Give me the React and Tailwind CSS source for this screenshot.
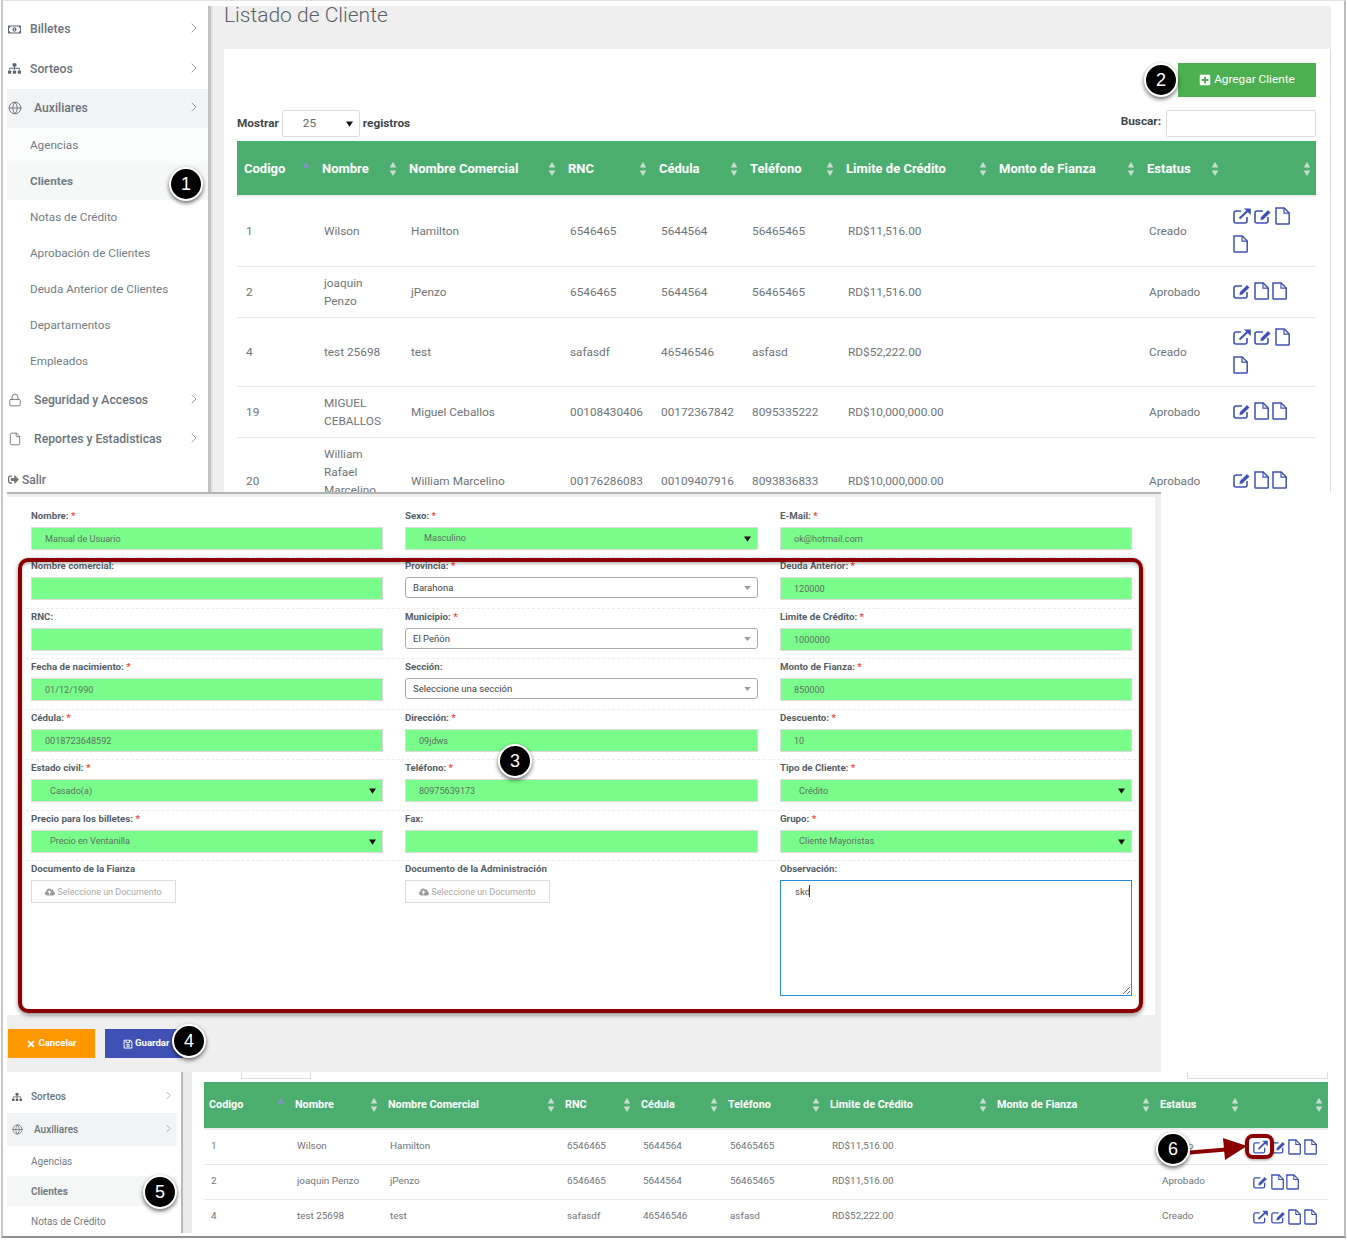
import React from 'react'
import { ChevronRight, Globe, Lock, File as FileIcon } from 'lucide-react'
import {
  FaRegMoneyBillAlt,
  FaSitemap,
  FaSignOutAlt,
  FaPlusSquare,
  FaCloudUploadAlt,
  FaTimes,
  FaRegSave,
} from 'react-icons/fa'

const clientes = [
  { id: '1', nombre: 'Wilson', comercial: 'Hamilton', rnc: '6546465', cedula: '5644564', tel: '56465465', limite: 'RD$11,516.00', estatus: 'Creado', icons: ['ext', 'edit', 'file', 'file'], h: 'h-[70px]' },
  { id: '2', nombre: 'joaquin Penzo', comercial: 'jPenzo', rnc: '6546465', cedula: '5644564', tel: '56465465', limite: 'RD$11,516.00', estatus: 'Aprobado', icons: ['edit', 'file', 'file'], h: 'h-[51px]' },
  { id: '4', nombre: 'test 25698', comercial: 'test', rnc: 'safasdf', cedula: '46546546', tel: 'asfasd', limite: 'RD$52,222.00', estatus: 'Creado', icons: ['ext', 'edit', 'file', 'file'], h: 'h-[69px]' },
  { id: '19', nombre: 'MIGUEL CEBALLOS', comercial: 'Miguel Ceballos', rnc: '00108430406', cedula: '00172367842', tel: '8095335222', limite: 'RD$10,000,000.00', estatus: 'Aprobado', icons: ['edit', 'file', 'file'], h: 'h-[51px]' },
  // the last line of this name falls under the form capture
  { id: '20', nombre: <>William Rafael Marcelino<br />&nbsp;</>, comercial: 'William Marcelino', rnc: '00176286083', cedula: '00109407916', tel: '8093836833', limite: 'RD$10,000,000.00', estatus: 'Aprobado', icons: ['edit', 'file', 'file'], h: 'h-[88px]' },
]

const headers = ['Codigo', 'Nombre', 'Nombre Comercial', 'RNC', 'Cédula', 'Teléfono', 'Limite de Crédito', 'Monto de Fianza', 'Estatus', '']
const bigWidths = ['w-[78px]', 'w-[87px]', 'w-[159px]', 'w-[91px]', 'w-[91px]', 'w-[96px]', 'w-[153px]', 'w-[148px]', 'w-[84px]', 'w-[92px]']
const smallWidths = ['w-[86px]', 'w-[93px]', 'w-[177px]', 'w-[76px]', 'w-[87px]', 'w-[102px]', 'w-[167px]', 'w-[163px]', 'w-[89px]', 'w-[84px]']

const ExtIcon = ({ className }) => (
  <svg viewBox="0 0 18 16" className={className} fill="none" stroke="#3f51b5">
    <path d="M8 3H3a2 2 0 0 0-2 2v8a2 2 0 0 0 2 2h9a2 2 0 0 0 2-2V9" strokeWidth="1.6" />
    <path d="M6.5 10.5 15 2.5" strokeWidth="2.2" />
    <path d="M11 0.4h6.8v6.6z" fill="#3f51b5" stroke="none" />
  </svg>
)

const EditIcon = ({ className }) => (
  <svg viewBox="0 0 18 16" className={className} fill="none" stroke="#3f51b5">
    <path d="M9 3H3a2 2 0 0 0-2 2v8a2 2 0 0 0 2 2h9a2 2 0 0 0 2-2V9" strokeWidth="1.6" />
    <path d="M6 12.5l.7-3.4L14 1.8l2.8 2.8-7.4 7.2z" fill="#3f51b5" stroke="#fff" strokeWidth="0.6" />
  </svg>
)

const FileOutline = ({ className }) => (
  <svg viewBox="0 0 15 18" className={className} fill="none" stroke="#3f51b5" strokeWidth="1.5">
    <path d="M1 .9h8.2L14.2 6v10.3a.8.8 0 0 1-.8.8H1.8a.8.8 0 0 1-.8-.8z" />
    <path d="M9 .9v5.3h5.2" strokeWidth="1.2" />
  </svg>
)

const SortIcon = ({ active }) => (
  <svg viewBox="0 0 8 15" className="w-[8px] h-[14px] shrink-0">
    <path d="M4 0l3.6 5.8H.4z" fill={active ? '#8a8fd0' : '#c9dccf'} />
    {!active && <path d="M4 15l3.6-5.8H.4z" fill="#c9dccf" />}
  </svg>
)

const Caret = () => (
  <svg viewBox="0 0 8 6" className="w-[7px] h-[6px]">
    <path d="M0 0h8L4 6z" fill="#111" />
  </svg>
)

const ActionIcons = ({ icons, small }) => {
  const ext = small ? 'w-[15px] h-[14px]' : 'w-[18px] h-[16px]'
  const file = small ? 'w-[13px] h-[16px]' : 'w-[15px] h-[18px]'
  return (
    <div className={small ? 'flex items-center gap-x-[2.5px]' : 'flex flex-wrap items-center gap-x-[3px] gap-y-[10px] w-[66px] -mt-[2px]'}>
      {icons.map((name, i) =>
        name === 'ext' ? (
          <ExtIcon key={i} className={ext} />
        ) : name === 'edit' ? (
          <EditIcon key={i} className={ext} />
        ) : (
          <FileOutline key={i} className={file} />
        )
      )}
    </div>
  )
}

const NavRow = ({ icon, label, wide, active }) => (
  <div className={`flex items-center h-[39.5px] pl-[1px] pr-[6px] text-[12.2px] font-medium text-[#6a737b] ${active ? 'bg-[#f2f3f4]' : ''}`}>
    <span className="w-[22px] flex text-[#5d656d]">{icon}</span>
    <span className={`flex-1 ${wide ? 'ml-[4px]' : 'ml-[0px]'}`}>{label}</span>
    <ChevronRight size={16} strokeWidth={1.25} className="text-[#888] -mt-[2px]" />
  </div>
)

const SubRow = ({ label, active, tint }) => (
  <div className={`flex items-center h-[36px] pl-[23px] text-[11.7px] text-[#737c84] ${tint ? 'bg-[#fafbfb]' : ''} ${active ? 'bg-[#f6f8f8] font-bold' : ''}`}>
    {label}
  </div>
)

const GreenInput = ({ value }) => (
  <input
    readOnly
    value={value}
    className="block w-full h-[23px] pl-[13px] pr-[13px] pt-[1px] bg-[#79fc89] border border-[#dcdcdc] text-[9.1px] text-[#5f7064] outline-none"
  />
)

const GreenSelect = ({ value }) => (
  <div className="flex items-center justify-between w-full h-[23px] pl-[18px] pr-[6px] pt-[1px] bg-[#79fc89] border border-[#dcdcdc] text-[9.1px] text-[#5f7064]">
    <span>{value}</span>
    <Caret />
  </div>
)

const WhiteSelect = ({ value }) => (
  <div className="flex items-center justify-between w-full h-[21px] pl-[7px] pr-[6px] pt-[1px] bg-white border border-[#a9a9a9] rounded-[3px] text-[9.5px] text-[#444]">
    <span>{value}</span>
    <svg viewBox="0 0 8 5" className="w-[7px] h-[4px]">
      <path d="M0 0h8L4 5z" fill="#999" />
    </svg>
  </div>
)

const UploadButton = () => (
  <div className="flex items-center justify-center gap-[2px] w-[145px] h-[23px] pt-[1px] border border-[#ddd] text-[9px] text-[#aaa]">
    <FaCloudUploadAlt size={10} className="text-[#999]" />
    <span>Seleccione un Documento</span>
  </div>
)

const Field = ({ label, required, children }) => (
  <div>
    <div className="h-[19px] pt-[1px] text-[9.7px] font-bold text-[#555e66] leading-[13px]">
      {label}
      {required && <span className="text-[#f44336]"> *</span>}
    </div>
    {children}
  </div>
)

const formRows = [
  [
    <Field label="Nombre:" required><GreenInput value="Manual de Usuario" /></Field>,
    <Field label="Sexo:" required><GreenSelect value="Masculino" /></Field>,
    <Field label="E-Mail:" required><GreenInput value="ok@hotmail.com" /></Field>,
  ],
  [
    <Field label="Nombre comercial:"><GreenInput value="" /></Field>,
    <Field label="Provincia:" required><WhiteSelect value="Barahona" /></Field>,
    <Field label="Deuda Anterior:" required><GreenInput value="120000" /></Field>,
  ],
  [
    <Field label="RNC:"><GreenInput value="" /></Field>,
    <Field label="Municipio:" required><WhiteSelect value="El Peñón" /></Field>,
    <Field label="Limite de Crédito:" required><GreenInput value="1000000" /></Field>,
  ],
  [
    <Field label="Fecha de nacimiento:" required><GreenInput value="01/12/1990" /></Field>,
    <Field label="Sección:"><WhiteSelect value="Seleccione una sección" /></Field>,
    <Field label="Monto de Fianza:" required><GreenInput value="850000" /></Field>,
  ],
  [
    <Field label="Cédula:" required><GreenInput value="0018723648592" /></Field>,
    <Field label="Dirección:" required><GreenInput value="09jdws" /></Field>,
    <Field label="Descuento:" required><GreenInput value="10" /></Field>,
  ],
  [
    <Field label="Estado civil:" required><GreenSelect value="Casado(a)" /></Field>,
    <Field label="Teléfono:" required><GreenInput value="80975639173" /></Field>,
    <Field label="Tipo de Cliente:" required><GreenSelect value="Crédito" /></Field>,
  ],
  [
    <Field label="Precio para los billetes:" required><GreenSelect value="Precio en Ventanilla" /></Field>,
    <Field label="Fax:"><GreenInput value="" /></Field>,
    <Field label="Grupo:" required><GreenSelect value="Cliente Mayoristas" /></Field>,
  ],
]

const Badge = ({ n, className }) => (
  <div className={`absolute flex items-center justify-center w-[34px] h-[34px] rounded-full bg-black border-[2px] border-white text-white text-[18px] font-['Liberation_Sans',sans-serif] shadow-[0_2px_4px_rgba(0,0,0,0.6)] ${className}`}>
    {n}
  </div>
)

const ClientTable = ({ small, rows, widths }) => (
  <table className={`table-fixed border-collapse ${small ? 'w-[1124px] text-[9.9px]' : 'w-[1079px] text-[11.8px]'} text-[#6f7479]`}>
    <thead>
      <tr className={`${small ? 'h-[47px] text-[10.8px]' : 'h-[55px] text-[13px]'} bg-[#4bae6f] text-white`}>
        {headers.map((title, i) => (
          <th key={i} className={`${widths[i]} ${small ? 'pl-[5px]' : 'pl-[7px] pt-[2px]'} pr-[5px] font-bold text-left`}>
            <div className="flex items-center justify-between">
              <span className="whitespace-nowrap">{title}</span>
              <SortIcon active={i === 0} />
            </div>
          </th>
        ))}
      </tr>
    </thead>
    <tbody>
      {rows.map((c, idx) => (
        <tr key={c.id} className={`${small ? 'h-[35px]' : c.h} border-b border-[#e9e9e9] ${idx === 0 ? 'border-t-[2px] border-t-[#ececec]' : ''}`}>
          {[c.id, c.nombre, c.comercial, c.rnc, c.cedula, c.tel, c.limite, '', c.estatus].map((val, i) => (
            <td
              key={i}
              className={`${small ? 'pl-[7px] whitespace-nowrap' : 'pl-[9px] leading-[18px]'} ${!small && i === 1 ? 'pr-[16px]' : ''}`}
            >
              {val}
            </td>
          ))}
          <td className="pl-[9px]">
            <ActionIcons icons={c.icons} small={small} />
          </td>
        </tr>
      ))}
    </tbody>
  </table>
)

export default function App() {
  const smallRows = clientes.slice(0, 3)

  return (
    <div className="relative w-[1347px] h-[1240px] bg-white overflow-hidden font-['Roboto',sans-serif]">
      <div className="ml-[1px] w-[1345px] h-[1238px] pl-[4px] border-t border-t-[#e2e2e2] border-l-2 border-l-[#c8c8c8] border-r-2 border-r-[#bdbdbd] border-b-2 border-b-[#8f8f8f]">
        {/* first capture: listado */}
        <div className="flex mt-[5px] w-[1324px] h-[486px] overflow-hidden">
          <aside className="w-[204px] pt-[3.5px] border-r-[3px] border-r-[#c2c2c2] shrink-0">
            <NavRow icon={<FaRegMoneyBillAlt size={13} />} label="Billetes" />
            <NavRow icon={<FaSitemap size={13} />} label="Sorteos" />
            <NavRow icon={<Globe size={14} strokeWidth={1.4} />} label="Auxiliares" wide active />
            <SubRow label="Agencias" tint />
            <SubRow label="Clientes" active />
            <SubRow label="Notas de Crédito" />
            <SubRow label="Aprobación de Clientes" />
            <SubRow label="Deuda Anterior de Clientes" />
            <SubRow label="Departamentos" />
            <SubRow label="Empleados" />
            <NavRow icon={<Lock size={14} strokeWidth={1.4} />} label="Seguridad y Accesos" wide />
            <NavRow icon={<FileIcon size={14} strokeWidth={1.4} />} label="Reportes y Estadisticas" wide />
            <div className="flex items-center gap-[3px] h-[41px] pl-[1px] text-[12px] font-medium text-[#6a737b]">
              <FaSignOutAlt size={11} className="text-[#777]" />
              Salir
            </div>
          </aside>
          <main className="flex-1 min-w-0 flex flex-col pl-[11px] bg-[#efefef] border-l-[2px] border-l-[#e4e4e4]">
            <h1 className="h-[43px] shrink-0 text-[21px] font-light leading-[18px] text-[#5a5f66]">Listado de Cliente</h1>
            <div className="flex-1 flex flex-col pt-[14px] pl-[13px] pr-[14px] bg-white border-r border-r-[#ddd]">
              <div className="flex justify-end">
                <button className="flex items-center justify-center gap-[3px] w-[138px] h-[34px] bg-[#4caf50] text-white text-[11.8px]">
                  <FaPlusSquare size={12} />
                  Agregar Cliente
                </button>
              </div>
              <div className="flex items-center justify-between mt-[13px] h-[27px] text-[11.8px] font-bold text-[#3f464c]">
                <div className="flex items-center gap-[3px]">
                  <span>Mostrar</span>
                  <div className="flex items-center justify-between w-[78px] h-[27px] pl-[20px] pr-[6px] border border-[#ddd] rounded-[2px] font-normal text-[#666]">
                    25
                    <Caret />
                  </div>
                  <span>registros</span>
                </div>
                <div className="flex items-center gap-[5px]">
                  <span className="-mt-[3px]">Buscar:</span>
                  <div className="w-[150px] h-[27px] border border-[#ddd] rounded-[2px]" />
                </div>
              </div>
              <div className="mt-[4px]">
                <ClientTable rows={clientes} widths={bigWidths} />
              </div>
            </div>
          </main>
        </div>

        {/* second capture: formulario */}
        <div className="relative w-[1154px] h-[580px] pt-[3px] bg-[#efefef] border-t-2 border-t-[#b4b4b4]">
          <form className="w-[1148px] h-[518px] pt-[10.9px] px-[19px] bg-white">
            {formRows.map((cols, r) => (
              <div key={r} className="grid grid-cols-[352px_353px_352px] gap-x-[22px] h-[50.5px] pl-[5px] border-b border-dashed border-b-[#ececec]">
                {cols.map((cell, c) => (
                  <div key={c}>{cell}</div>
                ))}
              </div>
            ))}
            <div className="grid grid-cols-[352px_353px_352px] gap-x-[22px] pl-[5px]">
              <Field label="Documento de la Fianza"><UploadButton /></Field>
              <Field label="Documento de la Administración"><UploadButton /></Field>
              <Field label="Observación:">
                <div className="relative">
                  <textarea
                    readOnly
                    defaultValue="skd"
                    className="block w-[352px] h-[116px] pl-[14px] pt-[4px] border border-[#2b8ad6] text-[9.5px] text-[#555] outline-none"
                  />
                  <span className="absolute left-[29px] top-[5px] w-px h-[12px] bg-[#333]" />
                </div>
              </Field>
            </div>
          </form>
          <div className="flex gap-[10px] pt-[14px] pl-[1px]">
            <button className="flex items-center justify-center gap-[2px] w-[87px] h-[29px] bg-[#ff9800] text-white text-[9.6px] font-bold">
              <FaTimes size={10} />
              Cancelar
            </button>
            <button className="flex items-center justify-start gap-[2px] w-[78px] h-[29px] pl-[18px] bg-[#3f51b5] text-white text-[9.6px] font-bold whitespace-nowrap">
              <FaRegSave size={10} />
              Guardar
            </button>
          </div>
        </div>

        {/* third capture: listado con acciones */}
        <div className="flex w-[1333px] h-[161px] overflow-hidden">
          <aside className="w-[170px] pt-[8px] shrink-0">
            <div className="flex items-center h-[33px] pl-[5px] pr-[2px] text-[10px] font-medium text-[#6a737b]">
              <FaSitemap size={10} className="text-[#555d66]" />
              <span className="flex-1 ml-[9px]">Sorteos</span>
              <ChevronRight size={13} strokeWidth={1.25} className="text-[#888] -mt-[2px]" />
            </div>
            <div className="flex items-center h-[33px] pl-[5px] pr-[2px] text-[10px] font-medium text-[#6a737b] bg-[#f2f3f4]">
              <Globe size={11} strokeWidth={1.4} className="text-[#555d66]" />
              <span className="flex-1 ml-[11px]">Auxiliares</span>
              <ChevronRight size={13} strokeWidth={1.25} className="text-[#888] -mt-[2px]" />
            </div>
            <div className="flex items-center h-[30px] pl-[24px] text-[10px] text-[#737c84]">Agencias</div>
            <div className="flex items-center h-[30px] pl-[24px] text-[10px] font-bold text-[#737c84] bg-[#f5f7f7]">Clientes</div>
            <div className="flex items-center h-[30px] pl-[24px] text-[10px] text-[#737c84]">Notas de Crédito</div>
          </aside>
          <div className="flex w-[15px] shrink-0 pl-[4px] bg-white">
            <div className="w-[2px] bg-[#b9b9b9]" />
            <div className="flex-1 bg-[#eaeaea]" />
          </div>
          <main className="flex-1 px-[12px] bg-white border-r border-r-[#dcdcdc]">
            <div className="flex justify-between h-[10px] pb-[3px]">
              <div className="ml-[37px] w-[70px] border-x border-b border-[#ddd]" />
              <div className="w-[141px] border-x border-b border-[#ddd]" />
            </div>
            <ClientTable small rows={smallRows} widths={smallWidths} />
          </main>
        </div>
      </div>

      {/* annotations */}
      <div className="absolute left-[18px] top-[558px] w-[1125px] h-[455px] border-4 border-[#8b0000] rounded-[10px] shadow-[0_2px_4px_rgba(0,0,0,0.45),inset_0_2px_3px_rgba(0,0,0,0.25)]" />
      <div className="absolute left-[1245px] top-[1134px] w-[29px] h-[25px] border-4 border-[#8b0000] rounded-[8px] shadow-[0_1px_3px_rgba(0,0,0,0.4)]" />
      <svg className="absolute left-[1188px] top-[1136px] w-[60px] h-[26px]" viewBox="0 0 60 26">
        <path d="M2 14.5 38 11.5 38 15.5 2 18.5z" fill="#8b0000" />
        <path d="M35 2 59 10 37 24z" fill="#8b0000" />
      </svg>
      <Badge n="1" className="left-[169px] top-[167px]" />
      <Badge n="2" className="left-[1144px] top-[63px]" />
      <Badge n="3" className="left-[498px] top-[744px]" />
      <Badge n="4" className="left-[172px] top-[1024px]" />
      <Badge n="5" className="left-[143px] top-[1175px]" />
      <Badge n="6" className="left-[1156px] top-[1132px]" />
    </div>
  )
}
